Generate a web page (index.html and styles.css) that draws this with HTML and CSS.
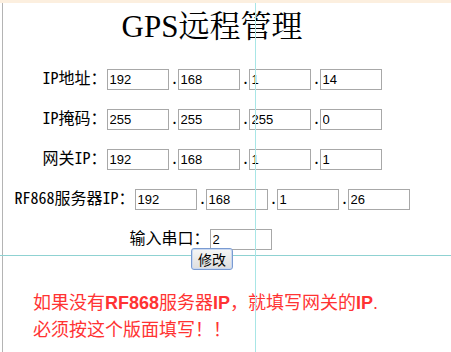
FILE: index.html
```html
<!DOCTYPE html>
<html lang="zh-CN">
<head>
  <meta charset="UTF-8" />
  <title>GPS远程管理</title>
  <link rel="stylesheet" href="styles.css">
</head>
<body>

<!-- design view guides -->
<div class="guide guide-top"></div>
<div class="guide guide-left"></div>
<div class="guide guide-col"></div>
<div class="guide guide-row"></div>

<div class="page">
  <h1 class="title">GPS远程管理</h1>

  <form class="ipform">
    <div class="row">
      <label>IP地址：</label>
      <input type="text" value="192"><span class="dot">.</span><input type="text" value="168"><span class="dot">.</span><input type="text" value="1"><span class="dot">.</span><input type="text" value="14">
    </div>
    <div class="row">
      <label>IP掩码：</label>
      <input type="text" value="255"><span class="dot">.</span><input type="text" value="255"><span class="dot">.</span><input type="text" value="255"><span class="dot">.</span><input type="text" value="0">
    </div>
    <div class="row">
      <label>网关IP：</label>
      <input type="text" value="192"><span class="dot">.</span><input type="text" value="168"><span class="dot">.</span><input type="text" value="1"><span class="dot">.</span><input type="text" value="1">
    </div>
    <div class="row">
      <label>RF868服务器IP：</label>
      <input type="text" value="192"><span class="dot">.</span><input type="text" value="168"><span class="dot">.</span><input type="text" value="1"><span class="dot">.</span><input type="text" value="26">
    </div>
    <div class="row row-port">
      <label>输入串口：</label>
      <input type="text" value="2">
    </div>
    <button type="button" class="btn">修改</button>
  </form>

  <p class="note">
    如果没有<b>RF868</b>服务器<b>IP</b>，就填写网关的<b>IP</b>.<br>
    必须按这个版面填写！！
  </p>
</div>

</body>
</html>
```

FILE: styles.css
```css
body {
  margin: 0;
  background: #fff;
  color: #000;
  font-family: "Noto Sans Mono CJK SC", "Noto Sans CJK SC", sans-serif;
}
.guide {
  position: absolute;
  pointer-events: none;
}
.guide-top {
  top: 0; left: 0; right: 0;
  height: 3px;
  background: #fcefdf;
}
.guide-left {
  top: 3px; bottom: 0; left: 2px;
  width: 1px;
  background: #b4b4b4;
}
.guide-col {
  top: 3px; bottom: 0; left: 255px;
  width: 1px;
  background: #a8e6e6;
  z-index: 3;
}
.guide-row {
  top: 255px; left: 0; right: 0;
  height: 1px;
  background: #8fd2d2;
}
.page {
  position: relative;
  z-index: 1;
  width: 424px;
}
.title {
  margin: 0;
  padding-top: 7px;
  height: 60px;
  line-height: 40px;
  text-align: center;
  font-size: 31px;
  font-weight: normal;
  font-family: "Liberation Serif", "Noto Serif CJK SC", "Noto Sans CJK SC", serif;
}
.ipform {
  margin: 0;
  display: flex;
  flex-direction: column;
  align-items: center;
}
.row {
  display: flex;
  align-items: baseline;
  height: 21px;
  margin-bottom: 19px;
  font-size: 16px;
  line-height: 21px;
}
.row input {
  box-sizing: border-box;
  width: 62px;
  height: 21px;
  margin: 0;
  padding: 0 2px;
  border: 1px solid #a8a8a8;
  font-family: "Liberation Sans", sans-serif;
  font-size: 13px;
  color: #000;
}
.dot {
  width: 7px;
  padding-left: 2px;
}
.row-port {
  margin-bottom: 0;
  padding-right: 23px;
}
.btn {
  box-sizing: border-box;
  width: 42px;
  height: 22px;
  padding: 0;
  border: 1px solid #7a9bd2;
  border-radius: 3px;
  background: linear-gradient(#f6f6f6, #dedede);
  box-shadow: inset 0 0 0 1px #c9d8f1;
  font-family: "Noto Sans CJK SC", sans-serif;
  font-size: 14px;
  line-height: 18px;
  color: #000;
}
.note {
  margin: 20px 0 0;
  padding-left: 33px;
  font-family: "Liberation Sans", "Noto Sans CJK SC", sans-serif;
  font-size: 18px;
  line-height: 27px;
  color: #f33;
}
.note b {
  font-weight: bold;
}
```
